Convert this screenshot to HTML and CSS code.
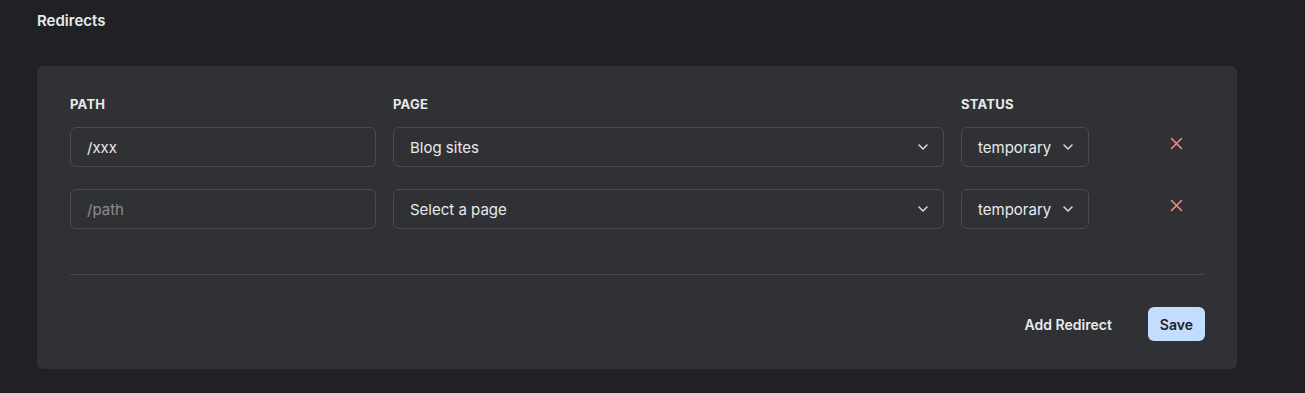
FILE: index.html
```html
<!DOCTYPE html>
<html lang="en">
<head>
    <meta charset="UTF-8">
    <meta name="viewport" content="width=device-width, initial-scale=1.0">
    <title>Redirects</title>
    <link rel="stylesheet" href="styles.css">
</head>
<body>
    <div class="page">
        <h2 class="section-title">Redirects</h2>

        <!-- Redirects card -->
        <div class="card">
            <div class="redirect-grid">
                <div class="col-label">Path</div>
                <div class="col-label">Page</div>
                <div class="col-label">Status</div>
                <div></div>

                <input class="field" type="text" value="/xxx" placeholder="/path">
                <div class="select">
                    <span>Blog sites</span>
                    <svg class="chevron" width="10" height="6" viewBox="0 0 10 6"><path d="M1 1l4 4 4-4" fill="none" stroke="currentColor" stroke-width="1.5" stroke-linecap="round" stroke-linejoin="round"/></svg>
                </div>
                <div class="select">
                    <span>temporary</span>
                    <svg class="chevron" width="10" height="6" viewBox="0 0 10 6"><path d="M1 1l4 4 4-4" fill="none" stroke="currentColor" stroke-width="1.5" stroke-linecap="round" stroke-linejoin="round"/></svg>
                </div>
                <button class="remove-btn" type="button" aria-label="Remove">
                    <svg width="13" height="13" viewBox="0 0 13 13"><path d="M1.5 1.5l10 10M11.5 1.5l-10 10" stroke="currentColor" stroke-width="1.6" stroke-linecap="round"/></svg>
                </button>

                <input class="field" type="text" value="" placeholder="/path">
                <div class="select">
                    <span>Select a page</span>
                    <svg class="chevron" width="10" height="6" viewBox="0 0 10 6"><path d="M1 1l4 4 4-4" fill="none" stroke="currentColor" stroke-width="1.5" stroke-linecap="round" stroke-linejoin="round"/></svg>
                </div>
                <div class="select">
                    <span>temporary</span>
                    <svg class="chevron" width="10" height="6" viewBox="0 0 10 6"><path d="M1 1l4 4 4-4" fill="none" stroke="currentColor" stroke-width="1.5" stroke-linecap="round" stroke-linejoin="round"/></svg>
                </div>
                <button class="remove-btn" type="button" aria-label="Remove">
                    <svg width="13" height="13" viewBox="0 0 13 13"><path d="M1.5 1.5l10 10M11.5 1.5l-10 10" stroke="currentColor" stroke-width="1.6" stroke-linecap="round"/></svg>
                </button>
            </div>

            <hr class="divider">

            <!-- Actions -->
            <div class="actions">
                <button class="text-btn" type="button">Add Redirect</button>
                <button class="save-btn" type="button">Save</button>
            </div>
        </div>
    </div>
</body>
</html>
```

FILE: styles.css
```css
/* Global styles */
body {
    margin: 0;
    padding: 0;
    font-family: 'Inter', 'Noto Sans', sans-serif;
    background: #202124;
    color: #e8eaed;
}

.page {
    padding: 11px 68px 0 37px;
}

.section-title {
    margin: 0 0 35px;
    font-size: 15px;
    line-height: 20px;
    font-weight: 600;
    color: #e8eaed;
}

/* Card */
.card {
    width: 1135px;
    background: #303134;
    border-radius: 6px;
    padding: 28px 32px 28px 33px;
}

.redirect-grid {
    display: grid;
    grid-template-columns: 306px 551px 128px 1fr;
    column-gap: 17px;
    row-gap: 22px;
    align-items: start;
}

.col-label {
    font-size: 13px;
    line-height: 20px;
    font-weight: 700;
    letter-spacing: 0.02em;
    text-transform: uppercase;
    color: #e8eaed;
    margin-bottom: -9px;
}

/* Inputs and selects */
.field,
.select {
    box-sizing: border-box;
    height: 40px;
    border: 1px solid #4a4c50;
    border-radius: 6px;
    background: #303134;
    color: #e8eaed;
    font-family: inherit;
    font-size: 15px;
}

.field {
    width: 100%;
    padding: 0 16px;
    outline: none;
}

.field::placeholder {
    color: #8a8d92;
}

.select {
    display: flex;
    align-items: center;
    justify-content: space-between;
    padding: 0 15px 0 16px;
    cursor: pointer;
}

.chevron {
    color: #dadce0;
    flex-shrink: 0;
}

.remove-btn {
    justify-self: end;
    width: 32px;
    height: 32px;
    margin-right: 13px;
    border: none;
    background: none;
    color: #f28b82;
    display: flex;
    align-items: center;
    justify-content: center;
    padding: 0;
    cursor: pointer;
}

.divider {
    border: none;
    border-top: 1px solid #45474b;
    margin: 45px 0 32px;
}

/* Footer buttons */
.actions {
    display: flex;
    justify-content: flex-end;
    align-items: center;
    gap: 24px;
}

.text-btn,
.save-btn {
    font-family: inherit;
    font-size: 14px;
    font-weight: 600;
    border: none;
    cursor: pointer;
    height: 34px;
    padding: 0 12px;
    border-radius: 6px;
}

.text-btn {
    background: none;
    color: #e8eaed;
}

.save-btn {
    background: #c2ddff;
    color: #202124;
}
```
